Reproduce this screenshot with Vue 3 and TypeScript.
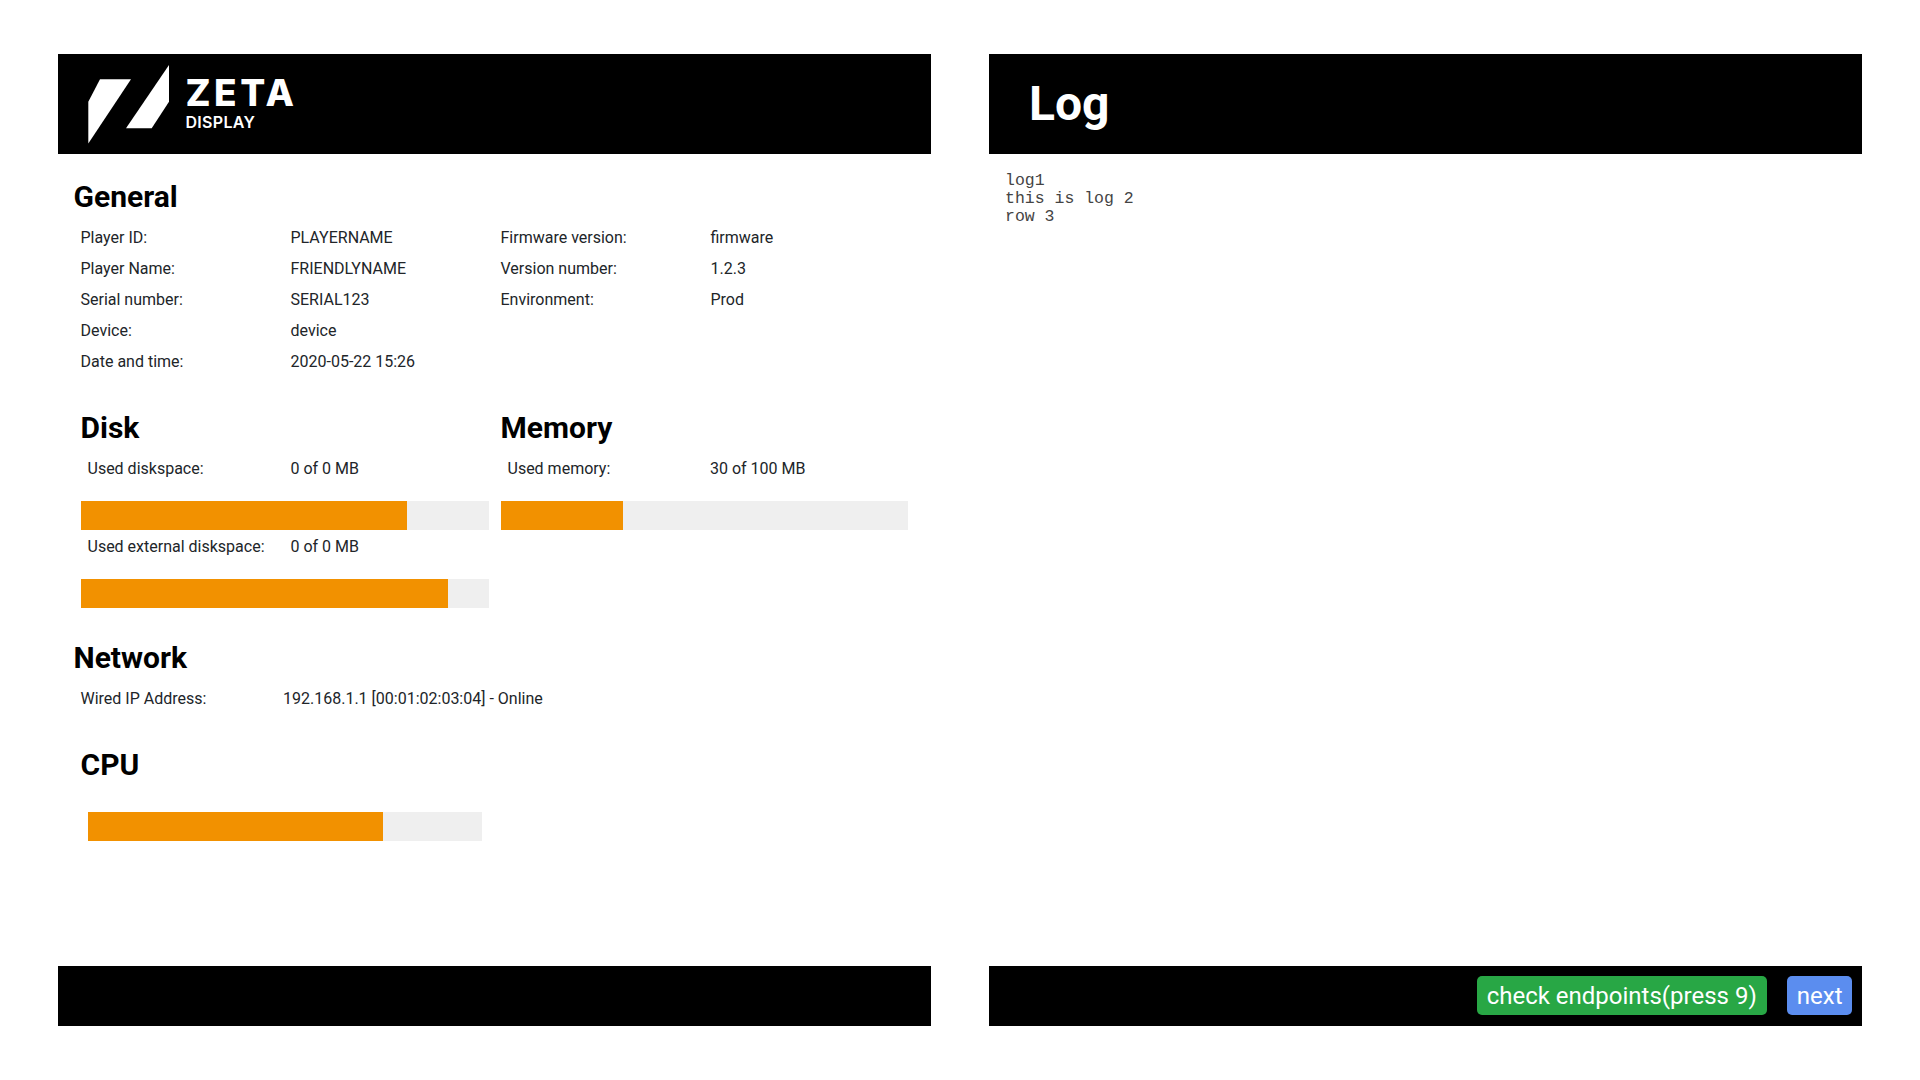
<script setup lang="ts">
interface Pair { label: string; value: string }
const generalLeft: Pair[] = [
  { label: 'Player ID:', value: 'PLAYERNAME' },
  { label: 'Player Name:', value: 'FRIENDLYNAME' },
  { label: 'Serial number:', value: 'SERIAL123' },
  { label: 'Device:', value: 'device' },
  { label: 'Date and time:', value: '2020-05-22 15:26' },
]
const generalRight: Pair[] = [
  { label: 'Firmware version:', value: 'firmware' },
  { label: 'Version number:', value: '1.2.3' },
  { label: 'Environment:', value: 'Prod' },
]
</script>

<template>
  <div class="page">
    <section class="panel">
      <header class="head">
        <svg class="mark" width="84" height="80" viewBox="0 0 84 80" aria-hidden="true">
          <polygon points="12,14.3 43,14.3 0.300,78.500 0.300,36.700" fill="#fff" />
          <polygon points="81,0 81,36.700 63.700,63.300 38,63.300" fill="#fff" />
        </svg>
        <div class="brand">
          <span class="zeta">ZETA</span>
          <span class="display">DISPLAY</span>
        </div>
      </header>
      <div class="body">
        <h2 class="title gen-title">General</h2>
        <div class="general">
          <div class="col">
            <div v-for="p in generalLeft" :key="p.label" class="row">
              <span class="lbl">{{ p.label }}</span><span>{{ p.value }}</span>
            </div>
          </div>
          <div class="col">
            <div v-for="p in generalRight" :key="p.label" class="row">
              <span class="lbl">{{ p.label }}</span><span>{{ p.value }}</span>
            </div>
          </div>
        </div>

        <div class="usage">
          <div class="stat">
            <h2 class="title">Disk</h2>
            <div class="row inset"><span class="lbl">Used diskspace:</span><span>0 of 0 MB</span></div>
            <div class="bar"><div class="fill" :style="{ width: '80%' }"></div></div>
            <div class="row inset"><span class="lbl">Used external diskspace:</span><span>0 of 0 MB</span></div>
            <div class="bar"><div class="fill" :style="{ width: '90%' }"></div></div>
          </div>
          <div class="stat">
            <h2 class="title">Memory</h2>
            <div class="row inset"><span class="lbl">Used memory:</span><span>30 of 100 MB</span></div>
            <div class="bar"><div class="fill" :style="{ width: '30%' }"></div></div>
          </div>
        </div>

        <h2 class="title network">Network</h2>
        <div class="row wired"><span class="lbl">Wired IP Address:</span><span>192.168.1.1 [00:01:02:03:04] - Online</span></div>

        <h2 class="title cpu-title">CPU</h2>
        <div class="bar cpu"><div class="fill" :style="{ width: '74.8%' }"></div></div>
      </div>
      <footer class="foot"></footer>
    </section>

    <section class="panel">
      <header class="head log-head"><h1>Log</h1></header>
      <div class="body"><pre class="log">log1
this is log 2
row 3</pre></div>
      <footer class="foot actions">
        <button class="btn green" type="button">check endpoints(press 9)</button>
        <button class="btn blue" type="button">next</button>
      </footer>
    </section>
  </div>
</template>

<style>
html, body { margin: 0; background: #fff; }
</style>

<style scoped>
.page {
  box-sizing: border-box;
  width: 1920px;
  height: 1080px;
  padding: 54px 58px;
  display: flex;
  gap: 58px;
  font-family: Roboto, "Liberation Sans", sans-serif;
  font-size: 16px;
  color: #212529;
  overflow: hidden;
}
.panel { width: 873px; display: flex; flex-direction: column; }
.head {
  height: 100px;
  flex: none;
  background: #000;
  color: #fff;
  display: flex;
  align-items: flex-start;
}
.mark { margin: 11px 0 0 30px; flex: none; }
.brand { display: flex; flex-direction: column; margin: 0 0 0 13.500px; font-family: Inter, sans-serif; }
.zeta {
  font-size: 37px;
  font-weight: 800;
  line-height: 30px;
  letter-spacing: 3.500px;
  margin-top: 24px;
}
.display { font-size: 16px; font-weight: 600; line-height: 14px; letter-spacing: 0.300px; margin-top: 7px; }
.body { flex: 1; padding: 18px 0 0 16px; }
.title {
  margin: 0;
  height: 49px;
  line-height: 49px;
  font-size: 30px;
  font-weight: 700;
  color: #000;
}
.gen-title { margin-left: -0.500px; }
.general { display: flex; padding-left: 6.500px; margin-top: 1px; }
.col { width: 420px; }
.row { display: flex; height: 31px; line-height: 31px; white-space: nowrap; }
.lbl { width: 210px; flex: none; }
.usage { display: flex; gap: 12px; margin-top: 26px; padding-left: 7px; }
.stat { width: 408px; }
.stat + .stat { width: 407px; }
.stat .title { margin-left: -0.500px; }
.inset { padding-left: 6.500px; line-height: 33px; }
.inset .lbl { width: 203px; }
.stat + .stat .inset .lbl { width: 202.500px; }
.bar { height: 29px; background: #efefef; margin: 18px 0 0; }
.fill { height: 100%; background: #f29100; }
.network { margin-top: 25px; margin-left: -0.500px; }
.wired { padding-left: 6.500px; margin-top: 1px; }
.wired .lbl { width: 202.500px; }
.cpu-title { margin: 26px 0 0 6.500px; }
.bar.cpu { width: 394px; margin: 23px 0 0 14px; }
.foot { height: 60px; flex: none; background: #000; }
.log-head { align-items: center; }
.log-head h1 { margin: 0 0 0 40px; font-size: 48px; font-weight: 700; line-height: 1; }
.log {
  margin: 0;
  font-family: "Liberation Mono", monospace;
  font-size: 16.500px;
  line-height: 18px;
  color: #444;
}
.actions { display: flex; justify-content: flex-end; align-items: flex-start; gap: 20px; padding: 10px 10px 0 0; box-sizing: border-box; }
.btn {
  border: 0;
  padding: 2px 10.500px 0 9.500px;
  height: 39px;
  border-radius: 5px;
  color: #fff;
  font-family: Roboto, sans-serif;
  font-size: 24px;
  line-height: 37px;
}
.green { background: #28a745; }
.blue { background: #5b8def; padding: 2px 9.500px 0; }
</style>
